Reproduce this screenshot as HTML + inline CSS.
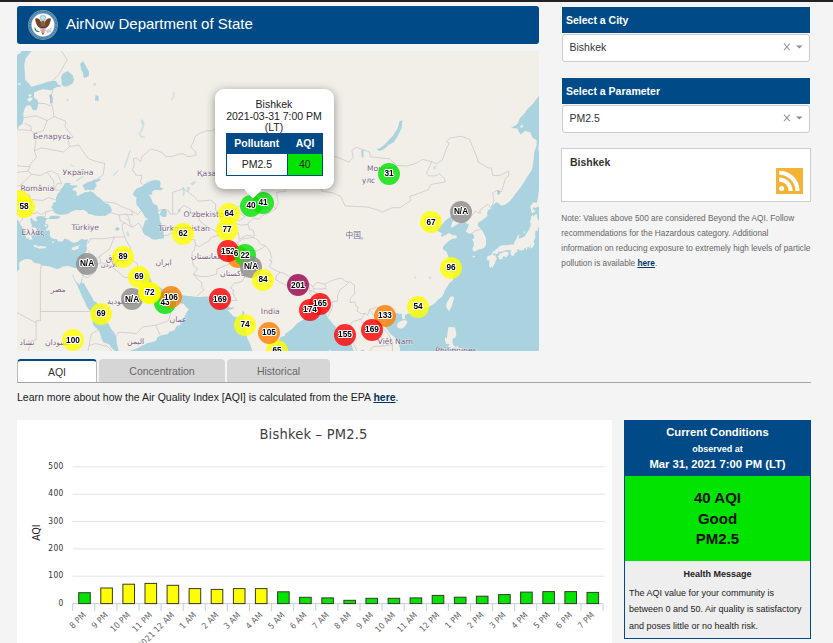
<!DOCTYPE html>
<html lang="en">
<head>
<meta charset="utf-8">
<title>AirNow Department of State</title>
<style>
html,body{margin:0;padding:0;}
body{width:833px;height:643px;overflow:hidden;position:relative;background:#f4f4f4;font-family:"Liberation Sans",Arial,sans-serif;color:#222;}
.abs{position:absolute;}
#topbar{left:0;top:0;width:833px;height:2px;background:#222;}
#hdr{left:17px;top:6px;width:522px;height:38px;background:#004b87;border-radius:3px;color:#fff;}
#hdr .t{position:absolute;left:49px;top:-1px;line-height:38px;font-size:15px;white-space:nowrap;}
#map{left:17px;top:51px;width:522px;height:300px;background:#f2efe9;overflow:hidden;}
.ph{left:562px;width:248px;height:26px;background:#004b87;color:#fff;font-weight:bold;font-size:10.5px;line-height:26px;}
.ph span{padding-left:4px;}
.sel{left:561.5px;width:246.5px;height:25.5px;background:#fff;border:1px solid #ccc;border-radius:3px;font-size:10.5px;line-height:24px;color:#333;}
.sel span{padding-left:7px;}
#citybox{left:561px;top:148px;width:248px;height:52px;background:#fff;border:1px solid #ccc;}
#citybox b{position:absolute;left:8px;top:7px;font-size:10.5px;color:#333;}
#note{left:561.3px;top:211px;width:262px;white-space:nowrap;font-size:8.25px;line-height:15px;color:#666;}
#note a{color:#00355f;font-weight:bold;text-decoration:underline;}
.tab{top:359px;height:23px;line-height:25px;text-align:center;font-size:10.5px;border-radius:4px 4px 0 0;background:#d6d6d6;color:#666;}
#tab1{left:17px;width:78px;background:#fff;color:#333;border:1px solid #bbb;border-bottom:none;border-top:2px solid #004b87;height:21px;line-height:22px;}
#tabline{left:17px;top:382px;width:794px;height:1px;background:#a4a4a4;}
#learn{left:17px;top:391px;font-size:10.5px;line-height:12px;white-space:nowrap;color:#222;}
#learn a{color:#00355f;font-weight:bold;text-decoration:underline;}
#chart{left:17px;top:420px;width:595px;height:230px;background:#fff;}
.mk{position:absolute;width:22px;height:22px;border-radius:50%;opacity:.8;filter:blur(.5px);}
.ml{position:absolute;width:40px;height:12px;line-height:12px;text-align:center;font-weight:bold;font-size:9.4px;transform:scaleX(.88);color:#000;text-shadow:-.8px -.8px 0 #fff,.8px -.8px 0 #fff,-.8px .8px 0 #fff,.8px .8px 0 #fff,0 1px 0 #fff,0 -1px 0 #fff,1px 0 0 #fff,-1px 0 0 #fff;}
#pop{position:absolute;left:197.5px;top:37.5px;width:119px;height:100px;background:#fff;border-radius:9px;box-shadow:0 2px 10px rgba(0,0,0,.4);}
#pop .pt{position:absolute;left:0;right:0;top:10.5px;text-align:center;font-size:10.5px;line-height:11.5px;color:#222;}
#pop .ptab{position:absolute;left:11.5px;top:44.5px;width:96.5px;height:42.5px;}
.ptab .r1{position:absolute;left:0;top:0;width:96.5px;height:20.5px;background:#004b87;color:#fff;font-weight:bold;font-size:10.5px;line-height:20px;}
.ptab .r2{position:absolute;left:0;top:20.5px;width:96.5px;height:22px;background:#004b87;font-size:10.5px;line-height:21px;color:#222;}
.ptab .c1{position:absolute;left:0;width:61.5px;text-align:center;}
.ptab .c2{position:absolute;left:61.5px;width:35px;text-align:center;}
.ptab .r2 .c1{left:.75px;top:0;width:60.25px;height:21.25px;background:#fff;}
.ptab .r2 .c2{left:61.75px;top:0;width:34px;height:21.25px;background:#00e400;}
#poptip{position:absolute;left:230px;top:132.5px;width:12px;height:12px;background:#fff;transform:rotate(45deg);}
#cc{left:624px;top:420px;width:185px;height:217px;border:1px solid #004b87;background:#eee;}
#cc .h{position:absolute;left:0;top:0;width:185px;height:55px;background:#004b87;color:#fff;text-align:center;font-weight:bold;}
#cc .g{position:absolute;left:0;top:55px;width:185px;height:85px;background:#00e400;color:#111;text-align:center;font-weight:bold;font-size:15px;line-height:20.5px;}
#cc .m{position:absolute;left:0;top:140px;width:185px;}
</style>
</head>
<body>
<div id="topbar" class="abs"></div>
<div id="hdr" class="abs"><svg class="seal" width="32" height="32" viewBox="-16 -16 32 32" style="position:absolute;left:9.8px;top:2.9px">
<circle r="14.9" fill="#7fae93"/><circle r="14.2" fill="#3a72b0"/><circle r="13" fill="none" stroke="#7ea3cf" stroke-width="1.3" stroke-dasharray=".9 .7"/><circle r="11.9" fill="#9fc0c9"/><circle r="11.2" fill="#fff"/>
<circle cx="0" cy="-7" r="3.2" fill="#a9cfe0"/><circle cx="0" cy="-7" r="1.7" fill="#cfe4ee"/>
<path d="M-1.6 -2.5C-3.2 -6.6-6.3 -7.6-7.9 -6.3C-7.6 -3.2-6.6 -.5-5 1.6L-2.4 3.6L-1.4 1Z" fill="#754524"/>
<path d="M1.6 -2.5C3.2 -6.6 6.3 -7.6 7.9 -6.3C7.6 -3.2 6.6 -.5 5 1.6L2.4 3.6L1.4 1Z" fill="#754524"/>
<path d="M-1.7 -3.6Q0 -5 1.7 -3.6L1.9 1.5H-1.9Z" fill="#8a5a2c"/>
<path d="M-2.6 5L0 10.2L2.6 5L1.2 6.8H-1.2Z" fill="#7a4a25"/>
<path d="M-2.3 1.2H2.3V5.2Q2.3 7.6 0 8.4Q-2.3 7.6-2.3 5.2Z" fill="#e36a6a"/>
<path d="M-2.3 1.2H2.3V3.2H-2.3Z" fill="#27408b"/>
<path d="M-1.4 3.2V7.7M0 3.2V8.3M1.4 3.2V7.7" stroke="#fff" stroke-width=".55"/>
<path d="M-8.6 2.5C-8.8 5-7.2 7-4.6 7.3L-3 6.2C-5.5 6-7.4 4.6-7.6 2.4Z" fill="#3e8a4a"/>
<path d="M3 6.2L8.2 3.2M3.6 7L8.8 4.6M4 7.7L8.4 6.3" stroke="#9a9a9a" stroke-width=".6"/>
</svg><span class="t">AirNow Department of State</span></div>
<div id="map" class="abs">
<svg width="522" height="300" viewBox="0 0 522 300" style="position:absolute;left:0;top:0">
<path d="M103.2 311.7L103.2 308.7L101.5 307.4L99.8 307.0L101.1 305.7L101.5 303.0L100.6 301.9L98.9 300.9L97.2 299.5L94.7 296.9L92.5 293.8L90.4 292.5L87.8 292.1L86.1 290.7L85.1 289.0L84.0 285.9L82.7 281.4L81.4 278.7L78.5 276.5L76.3 274.2L75.5 271.0L75.5 266.0L74.6 263.3L74.2 260.5L71.6 258.2L69.1 254.5L68.2 251.3L66.1 247.5L64.4 243.7L63.1 240.9L61.6 237.6L60.1 233.7L58.0 230.3L55.8 226.0L55.4 222.8L56.3 224.0L56.7 226.4L58.4 229.4L60.1 231.8L62.9 233.6L63.7 231.3L65.0 227.4L66.0 224.7L65.4 227.9L64.6 231.8L66.9 232.0L68.6 235.2L72.5 241.9L75.5 247.0L76.7 250.3L79.3 251.0L81.4 254.5L83.1 258.2L83.8 263.3L86.1 267.4L89.5 270.6L92.1 273.8L93.8 277.4L96.8 280.9L98.5 284.1L99.4 287.6L99.8 292.5L101.3 298.2L102.1 302.2L104.5 302.6L108.7 301.7L115.1 299.1L120.7 296.9L125.8 294.3L130.9 292.1L136.5 290.7L139.5 289.4L140.3 286.3L145.4 284.1L150.6 283.2L152.7 280.5L157.4 279.2L159.9 274.7L163.4 274.2L162.9 268.8L166.3 267.9L168.1 264.2L170.2 260.5L172.0 258.2L169.3 256.4L166.8 253.1L163.4 252.2L159.1 249.9L157.4 246.6L157.2 243.3L157.6 240.2L156.5 240.9L155.7 242.8L153.1 244.9L150.1 247.5L148.0 249.9L142.9 250.6L138.2 251.3L136.9 249.6L136.9 246.6L136.7 242.8L135.2 241.1L133.7 243.7L133.7 247.5L132.6 245.6L130.9 242.8L130.3 239.5L128.8 237.1L125.8 234.2L124.5 231.3L122.8 228.4L121.3 225.5L122.0 223.0L124.1 222.8L125.8 220.5L128.4 222.3L130.9 222.3L133.1 226.4L133.9 228.4L135.6 232.8L140.7 234.7L145.0 238.0L149.7 239.2L153.5 238.0L157.0 236.4L159.5 237.1L160.8 240.9L163.4 243.5L168.5 244.7L175.3 245.2L179.6 245.9L182.6 245.9L187.7 245.4L192.4 245.6L196.2 244.7L200.1 244.2L201.3 247.0L203.5 248.0L205.2 252.2L207.7 253.1L209.9 255.0L214.1 256.4L217.1 255.9L216.3 257.8L212.0 258.9L210.9 259.6L213.7 262.4L216.7 265.4L219.7 266.5L223.1 265.1L224.8 263.3L226.1 259.6L227.4 261.5L226.9 264.7L227.1 269.7L227.4 274.2L229.1 280.9L230.3 287.6L232.1 290.7L233.8 295.1L235.9 301.3L238.5 306.1L240.2 308.7L240.6 311.7ZM257.2 311.7L257.4 308.7L257.4 305.2L259.4 300.4L258.7 296.5L258.5 291.2L261.9 288.5L263.6 286.3L267.9 284.5L268.3 282.7L272.2 280.0L276.0 276.9L279.8 272.4L283.3 270.6L286.7 268.3L287.9 265.1L288.4 262.8L291.8 261.9L293.5 262.4L296.5 261.9L299.9 261.5L302.5 260.5L303.7 257.8L306.3 257.8L308.4 259.2L309.3 263.3L310.6 266.5L313.1 269.2L316.1 272.9L318.7 275.6L319.9 279.6L319.1 287.6L323.4 288.7L326.3 286.7L329.8 283.6L331.5 284.1L333.2 285.9L333.8 291.2L335.3 296.0L337.0 300.9L337.7 305.2L338.1 308.7L338.3 311.7ZM341.3 311.7L341.1 308.7L342.3 306.1L343.4 302.6L343.2 300.0L344.9 298.7L347.3 298.9L347.3 302.4L349.8 302.4L352.8 303.9L355.4 306.1L356.4 308.7L356.6 311.7ZM381.4 311.7L381.6 308.7L382.7 305.7L383.1 301.3L382.9 297.3L381.8 292.9L380.5 289.8L378.6 287.2L375.8 285.0L373.3 282.7L371.1 279.6L369.4 277.4L367.7 275.1L368.4 271.0L370.7 268.3L372.4 266.0L375.4 264.2L378.0 262.8L380.5 261.9L382.7 263.1L384.8 262.8L385.0 265.6L385.7 268.3L388.2 268.1L387.8 264.2L390.3 262.8L394.2 261.9L398.0 261.0L401.0 259.6L404.0 259.2L406.1 257.3L410.0 256.8L414.2 254.5L417.7 252.2L420.6 248.9L424.1 246.6L426.6 243.3L427.5 239.9L430.0 236.1L432.2 232.3L435.6 229.4L436.9 225.0L436.0 222.5L432.6 221.0L435.1 218.8L437.1 217.6L436.0 214.1L433.0 210.5L431.3 205.5L429.6 200.8L425.8 198.2L426.2 195.6L429.2 192.2L431.7 189.9L435.6 187.7L439.6 187.2L439.6 184.5L435.1 184.0L432.2 182.1L428.7 184.0L424.5 185.9L424.1 183.4L425.3 182.4L421.9 180.7L418.9 178.0L419.1 175.3L422.3 175.3L425.8 173.1L427.5 170.3L431.3 167.5L433.9 165.3L436.9 165.5L438.1 167.5L435.1 171.4L434.3 174.7L434.3 176.9L436.4 175.8L439.8 173.6L443.7 171.4L447.1 170.6L449.7 172.5L451.8 173.6L450.5 177.5L448.8 180.5L451.4 182.6L455.2 182.4L456.9 184.5L457.3 187.2L455.2 188.3L456.5 190.9L456.9 194.1L455.6 197.2L455.6 199.8L458.2 200.6L461.2 198.5L464.6 198.0L467.1 196.7L468.9 194.1L469.1 191.4L468.9 186.7L467.1 182.9L464.6 178.6L460.7 174.7L461.2 171.4L464.2 170.0L468.0 166.9L470.3 165.3L470.1 161.8L471.4 159.0L474.4 157.3L474.8 154.9L479.1 151.4L481.2 151.7L483.8 154.4L488.1 153.8L492.7 150.3L496.2 146.1L499.1 141.9L503.0 137.1L506.8 131.5L509.8 126.5L514.5 119.5L515.4 116.3L516.6 108.4L517.5 100.3L519.6 94.8L519.6 89.2L515.8 87.0L513.2 81.3L508.5 79.8L503.4 83.4L500.4 77.6L494.0 76.9L500.4 73.1L503.0 67.1L506.8 63.3L510.7 57.8L516.2 52.6L520.5 46.6L524.7 41.6L528.2 40.3L533.3 39.9L539.7 39.9L539.7 311.7ZM-23.5 144.3L-19.7 143.1L-18.8 145.5L-16.7 147.9L-15.0 150.3L-12.9 150.3L-9.9 152.6L-7.7 154.1L-6.0 155.2L-3.9 156.7L-1.8 158.7L-0.5 161.3L-0.3 163.0L-0.5 167.5L-0.1 168.6L2.1 170.9L2.9 173.1L5.1 175.8L6.8 179.1L9.3 179.9L7.2 181.8L8.9 184.5L9.3 187.7L11.5 186.9L12.5 189.6L14.0 188.0L15.7 189.6L14.9 186.7L14.0 183.7L16.2 184.5L17.0 183.2L15.3 181.5L17.9 181.8L19.4 183.2L19.1 180.2L16.6 178.0L14.5 176.4L14.9 174.2L13.6 170.9L13.2 167.8L14.7 166.9L16.2 169.2L18.7 170.6L20.4 169.5L18.7 166.9L20.9 165.3L24.3 165.0L27.3 165.5L28.1 166.9L31.1 166.9L28.5 170.0L28.5 173.3L31.5 173.6L31.1 176.4L29.4 177.7L29.0 179.9L32.4 179.1L33.0 181.8L32.8 184.5L34.1 186.7L37.1 188.0L40.1 188.3L41.3 190.4L45.6 190.4L47.3 187.5L51.1 188.5L53.7 190.4L56.7 191.8L60.5 190.9L64.4 187.7L67.8 188.8L71.2 188.3L69.9 192.0L69.5 194.6L69.9 198.2L68.6 201.4L68.0 203.4L66.5 207.0L65.9 208.5L65.0 212.1L63.5 215.1L61.0 217.1L57.5 217.1L54.6 216.1L51.1 215.1L48.6 215.3L46.0 215.6L43.9 216.8L40.1 218.3L35.4 216.6L32.8 215.6L27.7 214.8L24.3 214.6L23.0 212.8L19.1 212.3L15.7 211.0L15.3 209.3L12.7 208.3L8.9 208.0L5.9 209.0L2.5 211.0L1.9 214.1L2.5 218.1L0.4 220.3L-2.2 221.0L-5.6 219.6L-9.0 217.8L-12.4 216.6L-16.3 215.1L-17.8 212.6L-18.8 210.5L-23.5 209.5ZM40.9 163.6L37.1 161.6L36.2 159.0L34.1 156.1L35.8 154.4L35.8 152.0L38.8 150.9L39.0 146.7L40.9 142.5L43.3 140.1L43.7 138.3L45.6 136.2L47.9 132.2L50.7 131.5L52.9 132.2L54.6 132.2L52.4 133.4L55.8 134.6L58.8 134.6L60.1 134.3L60.1 136.2L56.7 137.1L55.4 139.2L58.8 140.1L59.9 142.2L59.3 144.0L60.7 145.0L63.5 143.4L66.1 142.2L67.8 141.0L70.3 141.3L72.3 140.7L73.1 140.1L75.9 141.3L78.0 143.1L79.7 144.9L83.1 147.3L86.1 150.0L88.7 152.3L91.7 153.2L93.8 156.1L94.9 159.6L94.2 161.3L91.7 163.0L88.3 165.0L86.1 164.7L82.3 165.0L78.9 164.7L75.9 164.1L73.3 163.0L71.2 163.0L69.9 160.7L66.7 158.7L63.1 159.3L58.8 159.0L54.6 160.4L50.7 163.0L45.6 163.8ZM72.7 139.5L71.6 138.6L68.2 139.5L66.7 136.8L65.4 134.3L67.8 133.1L70.3 131.2L73.8 130.6L77.2 128.4L80.2 128.4L82.7 127.8L84.4 128.1L82.7 129.4L80.2 130.9L78.0 131.5L79.3 133.4L79.7 135.3L78.0 136.5L77.2 138.9L74.2 138.9ZM31.1 167.5L33.7 165.0L36.2 164.7L40.3 164.7L43.9 166.1L40.5 168.1L36.2 168.1L33.7 168.3ZM119.4 153.5L119.2 148.5L119.8 146.7L116.2 144.3L116.4 141.9L118.1 138.9L120.7 137.1L124.1 135.9L127.1 133.4L130.1 131.5L134.3 129.7L138.6 129.1L142.9 129.7L143.7 132.8L142.9 135.9L146.3 137.7L143.3 139.5L141.6 138.9L137.8 138.9L135.2 140.4L135.2 143.7L131.4 143.7L133.5 146.1L135.2 149.7L136.1 152.6L140.3 154.4L141.6 159.0L140.7 161.3L142.5 163.6L142.5 165.8L142.9 170.3L144.6 172.5L143.3 174.2L146.7 176.4L146.5 182.4L147.1 185.1L146.9 187.5L142.9 187.7L138.6 188.8L135.2 188.3L131.4 185.6L127.9 184.0L125.6 180.7L125.4 176.9L126.7 174.2L127.7 170.6L129.7 168.6L131.8 168.3L128.4 166.7L126.7 163.6L124.1 159.8L122.4 157.3ZM142.7 163.6L144.6 159.0L148.0 157.8L150.1 161.3L149.3 165.8L145.4 166.1ZM-23.5 -21.8L25.5 -21.8L24.7 -14.5L21.7 -9.5L16.6 -2.5L11.9 3.3L8.5 8.0L7.2 14.5L8.1 23.5L8.1 28.8L11.9 32.3L14.5 35.7L20.4 34.0L26.4 32.3L31.9 30.6L36.2 30.1L39.2 30.1L40.5 33.1L44.3 34.9L43.0 35.7L40.1 36.1L36.6 37.4L35.8 39.5L29.8 38.7L25.5 38.2L21.7 39.5L17.0 41.6L17.0 46.6L20.4 49.0L21.3 52.2L20.6 57.0L18.7 59.4L15.7 59.0L13.6 54.6L9.8 54.6L7.6 57.8L6.3 62.5L6.6 68.6L5.5 73.1L2.1 75.0L0.4 78.7L-3.0 79.4L-4.7 76.5L-9.4 76.5L-13.7 79.8L-19.3 81.6L-23.5 82.0Z" fill="#aad3df"/>
<path d="M-23.5 159.0L-19.3 159.3L-17.1 159.6L-15.0 159.3L-14.1 160.1L-15.4 161.8L-11.1 164.1L-8.6 165.5L-6.5 166.7L-4.3 169.5L-5.0 171.4L-6.5 170.3L-7.3 168.6L-9.9 167.5L-11.1 168.1L-12.4 170.3L-12.9 172.0L-10.3 173.6L-9.9 175.8L-12.4 176.9L-12.6 179.1L-14.6 181.5L-16.5 181.5L-16.5 180.2L-15.6 178.0L-14.3 177.2L-14.8 174.2L-16.1 170.9L-17.5 170.0L-19.3 168.6L-23.5 168.1ZM-23.5 180.7L-18.4 180.2L-16.7 179.9L-18.0 182.4L-18.6 184.0L-18.0 186.4L-18.8 188.5L-23.5 188.0ZM17.0 194.1L19.6 194.3L20.4 195.4L23.4 195.0L26.8 195.6L29.0 195.6L28.7 197.2L25.5 197.5L22.3 197.7L19.1 196.2L17.0 195.9ZM54.6 196.9L55.8 196.2L57.3 196.4L57.5 195.4L60.5 195.1L64.4 193.5L61.6 195.6L61.4 196.7L62.0 197.4L60.1 198.2L57.5 199.3L55.0 198.5ZM34.9 191.2L37.1 189.6L37.3 190.4L35.6 192.5ZM14.9 176.4L16.6 175.8L19.6 177.7L21.7 181.3L20.0 181.3L17.4 179.1ZM27.0 174.5L29.4 173.9L30.2 175.6L28.1 175.8ZM389.1 269.2L390.6 271.3L388.2 275.1L386.1 276.9L383.9 277.8L380.5 276.5L380.1 272.9L382.7 270.4L386.1 269.2ZM435.4 245.2L437.3 246.6L435.8 251.3L434.7 255.5L432.6 259.2L432.4 261.0L431.3 258.9L429.8 257.3L429.2 254.5L429.8 251.7L431.7 248.5L433.2 246.3ZM455.0 206.0L456.5 204.7L458.4 205.2L456.9 206.5ZM475.5 202.6L473.1 204.4L470.6 204.9L469.7 207.5L470.6 209.5L472.3 209.0L472.3 212.1L472.3 216.1L474.0 216.8L474.4 214.6L475.3 217.3L476.1 215.6L477.6 213.1L478.7 209.5L479.9 207.5L478.7 206.0L478.7 204.2L476.5 204.4ZM482.3 202.6L484.2 202.4L486.8 200.8L489.3 200.6L491.3 201.4L491.5 203.4L489.3 206.2L486.6 204.9L484.2 208.8L482.1 207.8L481.7 206.0L480.2 205.7L482.1 204.4ZM475.3 202.6L475.3 200.8L477.4 200.1L480.4 197.2L482.9 194.9L485.5 194.3L489.8 194.3L493.6 193.5L496.6 193.8L497.4 190.9L500.0 186.9L500.2 184.8L502.8 184.0L501.5 186.1L501.7 187.7L505.1 186.7L508.1 184.8L510.2 181.5L512.4 178.0L513.9 174.2L513.0 170.6L514.1 167.5L513.7 166.7L515.4 163.8L516.6 165.3L518.1 163.6L519.6 162.7L520.3 166.9L522.0 170.3L522.8 173.1L520.9 178.0L520.5 179.7L518.3 180.2L518.1 183.4L518.3 186.7L516.6 190.4L517.7 193.3L515.8 196.2L513.4 197.7L513.4 195.4L514.1 194.1L512.8 194.9L512.6 196.4L510.5 195.9L510.2 197.7L509.2 199.3L508.7 196.7L507.7 197.2L506.4 199.3L502.6 199.3L500.9 198.2L499.8 199.0L500.9 200.8L498.3 201.6L496.2 205.2L494.5 204.2L493.2 201.9L494.5 199.3L492.3 199.0L489.8 198.8L486.8 200.1L484.2 200.8L481.7 200.8L480.4 203.2L477.8 202.4ZM491.5 200.6L492.7 199.3L492.5 200.8ZM506.4 182.1L507.7 179.7L507.9 181.3L507.3 182.4ZM514.9 162.1L514.1 159.0L513.2 155.5L515.8 152.0L516.2 151.2L519.2 152.0L520.1 150.9L521.1 145.5L521.8 140.1L522.4 138.3L525.2 141.3L528.2 144.6L532.4 147.3L536.7 145.5L539.7 145.5L539.7 152.0L536.3 152.0L533.3 153.5L529.9 155.5L528.2 159.3L524.7 157.6L521.3 155.5L518.3 157.0L515.8 156.1L516.2 158.4L518.8 159.8L517.9 160.4L516.0 162.1ZM525.6 79.1L523.5 85.6L521.8 92.7L521.3 98.2L523.0 104.4L523.0 112.4L522.6 119.5L523.0 125.9L522.2 132.2L522.8 135.6L524.7 131.5L528.2 130.3L528.8 134.9L529.4 132.8L527.3 127.8L525.2 125.3L526.5 118.9L527.3 114.3L531.1 115.6L534.1 118.2L532.4 115.0L528.6 112.4L530.3 106.4L528.6 99.6L528.2 93.4L527.7 87.0L526.9 82.0ZM502.6 76.1L506.0 73.1L505.5 76.9ZM536.7 148.8L539.7 144.3L539.7 147.9ZM431.3 276.2L433.9 276.0L438.1 276.5L439.0 281.8L439.4 283.6L438.1 286.7L435.6 288.1L435.6 291.2L436.0 293.8L438.1 296.0L440.3 295.1L442.0 296.9L445.0 296.9L444.1 299.1L446.5 300.9L446.2 302.8L445.2 302.4L442.8 300.9L439.8 300.0L439.4 296.9L436.0 296.7L433.9 298.2L431.5 297.1L431.3 294.7L433.0 293.8L431.3 292.9L429.2 292.9L428.1 289.4L427.9 286.3L430.0 287.2L430.2 284.1L430.7 280.5ZM430.0 298.9L432.8 298.7L435.1 300.9L435.1 303.5L433.4 304.1L431.7 302.2ZM447.1 302.8L451.4 302.8L453.1 308.7L453.1 311.7L449.7 311.7L449.7 307.8L447.3 305.2ZM442.4 303.0L445.4 304.3L445.8 306.1L443.7 305.0ZM436.9 305.7L439.8 307.2L442.0 307.2L442.0 311.7L436.9 311.7ZM428.3 303.9L430.0 304.3L429.6 306.1L428.3 305.7ZM425.3 311.7L426.2 308.1L427.0 311.7ZM113.0 311.7L119.0 308.8L122.8 308.3L126.7 308.3L130.1 307.2L133.5 305.4L135.4 305.9L134.8 308.7L134.8 311.7ZM144.2 302.8L147.1 302.2L149.3 302.8L146.3 303.9ZM312.3 298.7L313.8 299.1L313.3 303.0L312.7 306.5L311.6 306.5L311.8 302.6ZM132.0 240.7L132.9 240.9L132.6 242.6L132.2 242.3ZM152.7 238.8L156.5 237.3L156.7 238.0L154.0 239.2ZM166.8 266.7L168.3 267.6L167.2 268.8ZM436.9 222.0L438.6 221.8L438.1 223.0ZM434.3 213.8L436.9 214.8L435.6 215.3ZM-6.0 57.0L-3.0 51.8L-1.8 52.6L-3.5 57.8ZM-13.3 65.2L-10.3 56.6L-11.1 62.5ZM10.2 49.0L11.9 46.6L15.7 47.0L14.9 49.0L12.3 51.0ZM11.0 44.1L13.6 42.8L14.9 44.5L12.7 45.7ZM-23.5 34.9L-9.4 17.2L-8.6 12.7L-5.6 8.9L-2.2 5.2L3.4 2.3L7.6 -5.5L8.9 -11.5L11.5 -17.6L12.3 -21.8L-23.5 -21.8ZM-23.5 65.6L-15.8 66.3L-13.3 61.7L-12.0 55.4L-12.4 49.8L-10.3 45.7L-5.6 40.8L-2.6 35.7L-4.3 32.3L-9.4 28.8L-9.9 20.0L-9.4 17.2L-23.5 17.2ZM0.4 33.6L3.4 31.4L3.4 34.0ZM-20.5 73.9L-18.6 73.5L-18.8 74.6Z" fill="#f2efe9"/>
<path d="M44.7 34.0L48.2 35.7L51.1 34.9L55.8 32.3L57.1 28.8L55.8 24.4L50.7 20.0L46.0 22.6L43.9 26.2L44.7 30.6ZM67.8 27.1L71.6 25.3L72.1 20.9L68.6 14.5L66.1 9.9L63.1 12.7L64.4 19.1L66.1 21.8L66.1 25.3ZM78.0 49.8L81.9 49.8L81.4 44.9L78.5 44.1ZM33.2 52.2L35.8 52.2L35.8 46.6L34.5 43.3L31.9 44.1L33.2 48.2ZM359.2 98.6L363.0 100.0L367.3 97.9L371.6 94.1L376.7 91.3L380.5 85.6L384.4 77.6L385.7 69.4L382.7 70.1L380.5 77.6L376.3 84.2L371.6 89.2L367.3 94.1L362.6 97.2ZM229.9 137.7L231.2 134.0L235.0 130.6L239.3 131.2L243.6 132.2L247.8 131.5L252.1 131.5L255.1 130.3L254.7 133.4L250.4 134.0L246.1 133.4L241.0 134.0L236.7 134.0L234.2 137.1L232.9 141.3L230.8 140.7ZM241.9 156.7L246.6 154.7L250.8 154.9L250.4 157.3L246.1 158.4L243.1 158.1ZM97.7 178.0L100.2 176.1L102.8 177.5L101.1 179.7L98.5 179.1ZM479.9 139.5L482.9 139.5L483.4 143.1L480.4 144.0ZM342.1 186.1L346.0 185.9L346.4 188.3L343.0 188.8ZM344.3 98.9L346.4 98.9L346.4 106.4L344.7 106.4Z" fill="#aad3df"/>
<path d="M76.3 34.4L78.9 34.4L78.9 31.9L76.3 31.9ZM49.4 50.2L51.6 50.2L51.6 47.8L49.4 47.8ZM263.2 133.4L266.6 133.1L266.6 135.9L263.6 135.6ZM272.2 121.5L279.0 122.7L279.0 124.0L273.4 123.7ZM173.2 132.8L176.6 130.3L179.6 130.9L177.0 133.4L175.3 134.6ZM165.1 135.9L166.8 135.9L168.1 141.3L166.8 145.5L165.5 144.3L165.9 140.1ZM169.8 135.9L172.7 135.9L172.7 139.5L170.2 141.3ZM160.8 157.8L163.4 157.8L163.8 161.3L161.2 161.3ZM109.2 181.8L110.9 179.7L112.6 183.4L111.3 185.9L110.0 184.5ZM108.7 166.9L110.9 168.1L110.9 169.2L109.2 168.6ZM416.4 115.0L418.9 115.0L418.5 118.2L416.8 118.2ZM310.1 106.4L314.8 106.4L314.4 109.1L311.0 109.1ZM359.2 300.0L360.5 300.0L363.0 303.0L361.8 303.5ZM124.1 67.9L127.5 70.9L127.1 74.6L125.4 79.8L122.8 82.7L124.5 84.9L127.5 85.6L127.9 87.0L123.7 86.3L121.5 82.7L124.1 79.1L125.4 74.6L123.3 70.1ZM112.6 98.9L113.9 98.9L110.5 109.7L107.9 116.9L106.6 116.9L108.7 109.7ZM96.4 125.3L100.2 121.5L101.5 119.5L100.6 118.9L98.5 121.5L95.9 124.0ZM58.8 129.7L61.8 127.2L66.5 124.6L66.5 125.9L62.7 128.4L59.7 130.6ZM53.7 113.0L58.0 115.6L58.0 116.6L53.7 114.3ZM154.8 49.8L157.0 46.6L157.8 40.8L156.5 40.8L155.7 45.7L154.0 49.0ZM246.1 73.9L250.4 75.4L249.5 77.6L246.6 76.9ZM209.4 105.7L212.4 105.7L212.0 108.4L209.9 108.4ZM428.3 215.6L430.9 215.6L430.5 217.6L428.7 217.6ZM411.7 225.0L414.2 226.0L413.8 228.4L412.1 227.9ZM397.2 226.0L399.3 225.5L398.9 227.4L397.2 227.4Z" fill="#aad3df" opacity="0.55"/>
<path d="M125.8 133.4L123.3 131.5L125.0 124.6L118.6 124.0L117.3 120.8L115.1 119.5L117.3 115.0L116.4 107.7L119.4 107.1L123.7 110.4L125.0 105.7L133.5 98.2L140.7 99.6L145.0 101.7L149.3 105.7L154.4 105.7L162.1 103.0L166.8 103.0L170.6 105.7L179.1 104.4L178.7 100.3L173.6 96.2L177.0 89.9L177.9 85.6L183.4 82.0L189.8 79.8L194.9 79.8L198.3 77.6L207.7 74.6L211.1 72.4L218.8 72.4L220.5 80.5L226.1 82.0L230.3 82.0L232.5 84.9L243.1 80.5L249.1 87.0L258.1 104.4L264.5 104.4L272.6 103.0L280.7 107.7L289.2 115.6M289.2 115.6L282.8 120.2L282.4 127.2L270.9 127.8L267.9 138.3L269.2 140.1L259.4 141.3L261.1 152.0L258.9 157.8M289.2 115.6L291.4 115.0L299.0 110.4L311.4 104.4L319.1 105.7L331.9 111.1L336.2 106.4L334.9 99.6L339.1 96.2L352.8 101.0L353.2 105.7L364.7 107.1L372.4 107.7L379.7 114.3L389.5 115.0L398.9 112.4L405.3 108.4L414.7 110.7L419.4 113.0M291.4 115.0L294.8 121.5L304.6 133.4L305.0 140.1L315.7 141.9L323.8 145.5L328.1 154.9L341.3 155.5L351.1 156.1L362.6 159.6L364.7 161.3L375.4 156.7L383.1 156.7L394.2 149.1L392.5 145.5L401.4 142.5L410.8 138.9L414.2 133.4L417.7 132.8L428.3 130.9L427.5 127.8L422.3 122.7L417.7 125.0L411.3 124.6L409.5 121.8L411.7 117.6L414.7 110.7M419.4 113.0L425.3 109.1L429.2 98.2L432.2 92.0L429.2 90.6L433.0 87.0L444.1 85.2L452.6 88.4L460.7 108.4L461.2 111.1L471.4 116.9L474.4 116.9L475.7 124.6L482.5 124.6L491.5 120.2L491.9 124.6L488.5 127.2L484.6 140.7L479.5 139.5L475.7 141.9L477.0 150.3L474.0 156.7M474.0 156.7L471.0 153.2L462.9 159.0L463.3 162.4L458.2 160.1L454.3 165.3L447.5 170.3M454.8 182.4L458.6 179.7L464.6 178.0M377.5 262.8L373.3 261.0L372.0 256.4L366.0 254.5L363.9 256.8L357.5 256.8L352.6 258.7L350.7 264.2L348.3 262.4L344.3 262.8L340.0 260.1L341.3 256.4L338.7 255.0L337.9 250.8L333.2 251.7L333.2 247.5L337.9 242.3L337.4 234.2L332.7 230.8L331.9 231.3M331.9 231.3L327.2 235.6L322.5 239.0L320.4 245.6L320.8 249.9L314.8 251.0L315.3 255.5L314.4 259.6L311.8 263.8L310.6 266.0M311.8 261.0L309.1 252.7L305.9 253.1L306.7 250.8L311.0 246.6L299.9 245.2L299.9 241.9L293.9 239.5L292.6 242.8L296.5 246.6L292.6 248.9L295.2 250.8L295.6 255.0L296.7 260.1L296.5 262.4M258.5 228.4L259.8 224.0L263.2 221.5L267.0 222.0L275.6 227.9L283.7 232.3L292.6 232.8L292.6 239.9L287.9 239.9L282.8 239.0L278.1 236.1L272.2 235.4L265.3 232.3L258.5 228.4M296.1 235.6L299.9 231.3L307.6 233.2L309.3 237.8L302.0 238.0L296.5 238.0L296.1 235.6M292.6 232.8L296.1 235.6M307.6 233.2L315.3 229.4L323.8 226.9L328.5 230.3L331.9 231.3M263.2 221.5L258.9 219.6L254.2 217.1L252.5 215.1L255.1 210.0L252.5 209.5L254.7 206.5L253.0 200.8L248.7 194.6M207.7 252.7L210.3 249.9L219.7 249.4L215.8 242.3L216.7 239.0L213.3 237.1L217.1 232.3L224.8 230.6L229.9 223.0L234.6 217.6L235.0 213.1L238.5 211.0L235.5 210.0L232.5 206.5L232.1 199.3L239.7 199.8L245.3 197.2L248.7 194.6M176.6 223.3L183.4 225.5L190.2 225.5L199.6 223.3L200.1 218.1L206.0 215.6L212.4 213.1L213.3 207.0L216.7 206.0L215.0 202.4L220.1 202.1L222.2 195.1L220.5 191.4L226.1 187.7L236.3 186.4M236.3 186.4L240.6 188.8L244.4 193.8L248.7 194.6M236.3 185.3L229.5 184.2L222.2 188.3L221.4 181.8L216.3 183.4L212.4 186.1L206.9 186.7L206.0 185.6L200.5 184.8L196.6 185.6L193.2 187.2L191.9 190.4L186.0 193.0L182.6 195.6L178.3 194.1M178.3 194.1L177.4 198.8L174.9 202.4L175.3 207.0L176.4 215.1L180.4 217.6L176.6 223.3L179.6 227.4L184.7 231.3L184.7 236.1L186.8 239.0L179.6 245.6M178.3 194.1L177.9 188.8L174.0 188.5L169.8 184.0L161.7 180.2L157.4 180.7L150.6 184.2L146.7 184.8M123.9 222.8L120.3 218.1L120.3 212.6L113.0 207.5L110.9 202.4L113.9 196.7L110.5 192.0L107.9 185.9M107.9 185.9L105.8 179.1L104.9 173.6L107.9 172.0L115.1 176.4L121.5 172.0L123.0 173.6L125.4 178.8M70.3 192.5L71.2 192.0L73.3 187.7L78.9 187.7L87.4 187.7L97.4 186.1L107.9 185.9M94.0 161.8L102.3 164.1L103.2 169.7L107.9 172.0M87.4 150.9L98.1 152.0L104.5 155.5L114.7 159.6L120.7 163.6L124.1 159.8M102.3 164.1L108.7 163.0L115.6 164.1L114.7 159.6M108.7 163.0L111.3 165.8L113.0 172.5L115.1 176.4M97.4 186.1L92.5 198.2L82.3 205.5L73.8 211.0L69.1 209.0M82.3 205.5L84.0 211.8L89.1 213.1L96.4 217.1L107.5 226.4L115.1 226.9L119.0 222.0L121.5 222.5M115.1 226.9L120.3 229.9L123.3 229.6M84.0 211.8L74.6 215.1L78.9 220.0L76.7 222.5L70.8 226.4L66.1 225.7M65.7 225.0L62.9 216.1M66.1 225.0L68.2 215.1L68.6 209.0L66.5 207.0M68.6 209.0L69.9 205.5L72.9 201.4L70.3 199.0M24.1 214.3L23.4 222.5L23.4 260.5L23.4 269.7L19.1 269.7L19.1 271.9L19.1 289.0L14.5 289.4L12.3 295.6L11.5 300.0M23.4 260.5L50.7 260.5L61.8 260.5L74.2 260.5M19.1 271.9L-2.2 260.5M81.4 278.7L74.6 282.7L72.5 291.6L72.1 294.7L78.5 292.5L83.6 293.8L90.8 295.6L97.7 303.0L100.6 302.2M72.1 294.7L70.8 300.9M97.7 303.0L95.1 306.5L95.9 309.6M99.4 285.9L101.1 281.4L105.3 281.4L114.7 282.1L119.4 282.7L125.8 276.0L138.6 274.2L143.3 284.7M138.6 274.2L151.4 269.7L154.4 260.5L152.3 257.3L141.2 256.2L136.9 250.8M152.3 257.3L154.8 250.3L157.4 247.0M133.5 247.8L136.9 248.5M200.5 184.8L200.9 181.3L190.7 176.1L183.0 170.3L180.9 164.1L173.2 162.4L173.2 157.8L166.8 154.4L163.4 157.8L159.9 163.0L155.7 163.0L155.7 141.3L166.8 137.7L177.0 145.5L181.3 150.3L193.7 149.1L198.8 153.2L198.3 159.0L206.5 163.6L209.4 166.9L211.6 162.4L218.0 158.4L219.5 157.6L223.1 154.4L230.3 156.4L230.8 152.9L239.7 154.1L246.1 153.5L254.7 154.4L258.9 157.8L251.3 162.4L244.9 164.7L242.3 168.1L236.3 167.5L231.6 171.4L231.0 173.3L232.5 178.6L236.3 179.1L237.6 184.5L236.3 185.3M155.7 163.0L153.1 163.0L151.0 159.0L145.0 158.4L140.7 160.4M231.0 173.3L224.8 174.2L217.5 172.5L212.4 170.9L212.4 166.4L217.5 169.2L222.7 169.5L228.2 165.8L223.1 162.4L216.3 161.8L219.5 157.6M206.0 185.6L207.3 176.4L204.3 173.1L209.0 172.5L212.4 166.4M35.4 30.1L41.8 23.5L50.3 8.9L44.7 0.4L45.6 -6.5M36.6 39.5L33.7 44.9L34.1 53.0L35.4 55.4L37.1 65.6L48.6 70.1L48.2 76.1L56.3 86.3L51.1 87.7L52.4 95.5L61.8 94.1L67.8 103.0L71.6 107.7L78.9 110.4L87.8 112.4L86.1 124.0L79.7 128.4M20.6 52.2L27.7 52.6L33.7 55.0M6.6 66.6L19.1 64.8L30.2 69.5L37.1 65.6M30.2 69.5L26.4 79.8L17.0 82.3L14.0 79.4L1.2 78.7M14.0 79.4L14.0 75.4L7.6 72.4M52.4 95.5L46.9 101.0L35.4 98.9L24.7 96.9L17.4 99.6L18.7 91.3L17.0 82.3M17.4 99.6L19.6 106.4L13.2 113.0L13.0 115.6L11.3 120.2L14.5 123.1L23.0 124.6L30.2 121.1L34.5 119.9L40.9 123.4L44.7 132.8L40.3 132.5L37.1 138.6L43.0 139.5M30.2 121.1L36.6 129.7L37.1 138.6M-2.2 113.7L2.1 115.0L13.0 115.6M-2.2 122.1L4.2 120.8L11.3 120.2M38.7 148.9L31.9 146.7L25.5 149.4L13.6 148.5L12.5 144.3L8.1 142.2L3.4 134.3L8.5 129.1L14.5 123.1M36.3 159.1L29.2 160.7L27.9 166.1M29.2 160.7L24.7 163.3L20.4 161.6L14.7 162.8L12.1 157.3L12.7 153.2L13.6 148.5M14.7 162.8L6.3 165.5L4.6 169.7L2.1 172.0M-0.5 159.8L4.2 157.8L4.6 159.8L4.2 163.0L6.3 165.5M4.2 157.8L8.9 157.6L12.1 157.3M3.4 134.3L-2.2 135.9M-2.2 141.9L-0.5 141.9L0.4 147.3L-1.3 150.3L3.4 154.4L4.2 157.8M348.3 262.4L343.8 268.1L334.9 271.0L332.3 276.5L337.4 286.3L335.7 291.2L339.6 298.7L340.0 306.1L338.1 311.7M343.8 268.1L345.5 271.9L348.5 271.9L347.7 279.2L352.4 277.8L357.5 276.9L363.5 281.4L363.7 285.9L367.3 290.3L365.6 295.1L356.2 295.4L353.7 298.2L355.8 306.5M352.6 258.7L356.2 264.2L363.0 267.9L360.5 271.9L365.6 276.0L371.6 283.6L375.4 291.2L375.4 293.4L375.4 303.9L368.2 307.0L362.4 312.2M365.6 295.1L369.4 294.7L375.4 293.4" fill="none" stroke="#b3a3b6" stroke-width="0.55" stroke-linejoin="round" opacity="0.8"/>
<g font-family="'DejaVu Sans','Noto Sans CJK SC',sans-serif" fill="#7b6384" stroke="#fff" stroke-opacity="0.55" stroke-width="1" paint-order="stroke" letter-spacing="0"><text x="35.0" y="87.8" font-size="7.7" text-anchor="middle" >Беларусь</text><text x="61.0" y="124.3" font-size="7.7" text-anchor="middle" >Україна</text><text x="20.3" y="139.8" font-size="7.7" text-anchor="middle" >România</text><text x="16.0" y="183.8" font-size="7.7" text-anchor="middle" >Ελλάς</text><text x="68.3" y="179.3" font-size="7.7" text-anchor="middle" >Türkiye</text><text x="189.0" y="165.8" font-size="7.7" text-anchor="middle" >O'zbekiston</text><text x="41.2" y="240.9" font-size="7.7" text-anchor="middle" >مصر</text><text x="104.9" y="252.8" font-size="8" text-anchor="middle" >السعودية</text><text x="161.0" y="270.9" font-size="7.7" text-anchor="middle" >عمان</text><text x="118.6" y="293.4" font-size="7.7" text-anchor="middle" >اليمن</text><text x="10.0" y="293.8" font-size="7.7" text-anchor="middle" >تشاد</text><text x="41.2" y="293.8" font-size="7.7" text-anchor="middle" >السودان</text><text x="146.6" y="214.0" font-size="7.7" text-anchor="middle" >ایران</text><text x="100.0" y="210.0" font-size="8.5" text-anchor="middle" >العراق</text><text x="92.0" y="215.5" font-size="6.5" text-anchor="middle" >الأردن</text><text x="190.0" y="207.9" font-size="8" text-anchor="middle" >افغانستان</text><text x="215.7" y="225.0" font-size="7.7" text-anchor="middle" >پاکستان</text><text x="439.0" y="302.3" font-size="7.7" text-anchor="middle" >Philippines</text><text x="201.0" y="124.5" font-size="7.7" text-anchor="middle" >Қазақстан</text><text x="365.0" y="120.3" font-size="7.7" text-anchor="middle" >Монгол</text><text x="351.5" y="132.3" font-size="7.7" text-anchor="middle" >улс</text><text x="167.0" y="179.8" font-size="7.7" text-anchor="middle" >Türkmenistan</text><text x="253.3" y="262.9" font-size="7.7" text-anchor="middle" >India</text><text x="378.3" y="292.5" font-size="7.7" text-anchor="middle" >Việt Nam</text><text x="336.2" y="187.0" font-size="7.7" text-anchor="middle" >中国</text></g>
</svg>
<div class="mk" style="left:-9.0px;top:139.0px;background:#ffff00"></div>
<div class="mk" style="left:-3.9px;top:144.7px;background:#ffff00"></div>
<div class="mk" style="left:45.1px;top:278.4px;background:#ffff00"></div>
<div class="mk" style="left:72.9px;top:252.0px;background:#ffff00"></div>
<div class="mk" style="left:59.2px;top:202.0px;background:#8c8c8c"></div>
<div class="mk" style="left:95.1px;top:195.0px;background:#ffff00"></div>
<div class="mk" style="left:110.8px;top:215.0px;background:#ffff00"></div>
<div class="mk" style="left:104.3px;top:237.3px;background:#8c8c8c"></div>
<div class="mk" style="left:136.5px;top:240.7px;background:#00e400"></div>
<div class="mk" style="left:142.5px;top:235.4px;background:#ff7e00"></div>
<div class="mk" style="left:120.5px;top:230.6px;background:#ffff00"></div>
<div class="mk" style="left:121.6px;top:230.6px;background:#ffff00"></div>
<div class="mk" style="left:154.6px;top:171.5px;background:#ffff00"></div>
<div class="mk" style="left:201.1px;top:151.6px;background:#ffff00"></div>
<div class="mk" style="left:199.4px;top:167.7px;background:#ffff00"></div>
<div class="mk" style="left:234.5px;top:141.2px;background:#00e400"></div>
<div class="mk" style="left:223.3px;top:143.6px;background:#00e400"></div>
<div class="mk" style="left:210.1px;top:194.8px;background:#ff7e00"></div>
<div class="mk" style="left:200.0px;top:189.3px;background:#ff0000"></div>
<div class="mk" style="left:217.4px;top:193.3px;background:#00e400"></div>
<div class="mk" style="left:223.0px;top:204.5px;background:#8c8c8c"></div>
<div class="mk" style="left:235.3px;top:218.2px;background:#ffff00"></div>
<div class="mk" style="left:269.7px;top:223.4px;background:#99004c"></div>
<div class="mk" style="left:191.7px;top:237.3px;background:#ff0000"></div>
<div class="mk" style="left:216.8px;top:263.0px;background:#ffff00"></div>
<div class="mk" style="left:248.5px;top:288.9px;background:#ffff00"></div>
<div class="mk" style="left:240.7px;top:271.2px;background:#ff7e00"></div>
<div class="mk" style="left:282.3px;top:247.6px;background:#ff0000"></div>
<div class="mk" style="left:292.3px;top:241.6px;background:#ff0000"></div>
<div class="mk" style="left:316.7px;top:272.5px;background:#ff0000"></div>
<div class="mk" style="left:357.3px;top:254.1px;background:#ff7e00"></div>
<div class="mk" style="left:343.8px;top:268.1px;background:#ff0000"></div>
<div class="mk" style="left:389.5px;top:244.7px;background:#ffff00"></div>
<div class="mk" style="left:423.4px;top:205.6px;background:#ffff00"></div>
<div class="mk" style="left:402.8px;top:160.3px;background:#ffff00"></div>
<div class="mk" style="left:432.8px;top:149.6px;background:#8c8c8c"></div>
<div class="mk" style="left:361.4px;top:111.9px;background:#00e400"></div>
<div class="ml" style="left:-12.9px;top:148.9px">58</div>
<div class="ml" style="left:36.1px;top:282.6px">100</div>
<div class="ml" style="left:63.9px;top:256.2px">69</div>
<div class="ml" style="left:50.2px;top:206.2px">N/A</div>
<div class="ml" style="left:86.1px;top:199.2px">89</div>
<div class="ml" style="left:101.8px;top:219.2px">69</div>
<div class="ml" style="left:95.3px;top:241.5px">N/A</div>
<div class="ml" style="left:127.5px;top:244.9px">43</div>
<div class="ml" style="left:133.5px;top:239.6px">106</div>
<div class="ml" style="left:111.5px;top:234.8px">57</div>
<div class="ml" style="left:112.6px;top:234.8px">72</div>
<div class="ml" style="left:145.6px;top:175.7px">62</div>
<div class="ml" style="left:192.1px;top:155.8px">64</div>
<div class="ml" style="left:190.4px;top:171.9px">77</div>
<div class="ml" style="left:225.5px;top:145.4px">41</div>
<div class="ml" style="left:214.3px;top:147.8px">40</div>
<div class="ml" style="left:191.0px;top:193.5px">152</div>
<div class="ml" style="left:199.3px;top:196.4px">6</div>
<div class="ml" style="left:208.4px;top:197.5px">22</div>
<div class="ml" style="left:214.0px;top:208.7px">N/A</div>
<div class="ml" style="left:226.3px;top:222.4px">84</div>
<div class="ml" style="left:260.7px;top:227.6px">201</div>
<div class="ml" style="left:182.7px;top:241.5px">169</div>
<div class="ml" style="left:207.8px;top:267.2px">74</div>
<div class="ml" style="left:239.5px;top:293.1px">65</div>
<div class="ml" style="left:231.7px;top:275.4px">105</div>
<div class="ml" style="left:273.3px;top:251.8px">174</div>
<div class="ml" style="left:283.3px;top:245.8px">165</div>
<div class="ml" style="left:307.7px;top:276.7px">155</div>
<div class="ml" style="left:348.3px;top:258.3px">133</div>
<div class="ml" style="left:334.8px;top:272.3px">169</div>
<div class="ml" style="left:380.5px;top:248.9px">54</div>
<div class="ml" style="left:414.4px;top:209.8px">96</div>
<div class="ml" style="left:393.8px;top:164.5px">67</div>
<div class="ml" style="left:423.8px;top:153.8px">N/A</div>
<div class="ml" style="left:352.4px;top:116.1px">31</div>
<div id="pop">
 <div class="pt">Bishkek<br>2021-03-31 7:00 PM<br>(LT)</div>
 <div class="ptab"><div class="r1"><span class="c1">Pollutant</span><span class="c2">AQI</span></div><div class="r2"><span class="c1">PM2.5</span><span class="c2">40</span></div></div>
</div>
<div id="poptip"></div>
</div>

<div class="abs ph" style="top:7px"><span>Select a City</span></div>
<div class="abs sel" style="top:34px"><span>Bishkek</span><svg width="24" height="12" viewBox="0 0 24 12" style="position:absolute;left:219px;top:6px"><path d="M2 2.6L7.8 9.2M7.8 2.6L2 9.2" stroke="#999" stroke-width="1.1" fill="none"/><path d="M14 4.4h6.6L17.3 7.6Z" fill="#8c8c8c"/></svg></div>
<div class="abs ph" style="top:78px"><span>Select a Parameter</span></div>
<div class="abs sel" style="top:105px"><span>PM2.5</span><svg width="24" height="12" viewBox="0 0 24 12" style="position:absolute;left:219px;top:6px"><path d="M2 2.6L7.8 9.2M7.8 2.6L2 9.2" stroke="#999" stroke-width="1.1" fill="none"/><path d="M14 4.4h6.6L17.3 7.6Z" fill="#8c8c8c"/></svg></div>
<div id="citybox" class="abs"><b>Bishkek</b><svg width="27" height="26" viewBox="0 0 27 26" style="position:absolute;left:214px;top:19px"><rect width="27" height="26" fill="#f5b335"/><circle cx="5.6" cy="20.4" r="2.5" fill="#fff"/><path d="M3.2 11.5A11.45 11.45 0 0 1 14.65 22.95" stroke="#fff" stroke-width="4" fill="none"/><path d="M3.2 4.7A18.25 18.25 0 0 1 21.45 22.95" stroke="#fff" stroke-width="4.1" fill="none"/></svg></div>
<div id="note" class="abs">Note: Values above 500 are considered Beyond the AQI. Follow<br>recommendations for the Hazardous category. Additional<br>information on reducing exposure to extremely high levels of particle<br>pollution is available <a>here</a>.</div>

<div id="tab1" class="abs tab">AQI</div>
<div class="abs tab" style="left:99px;width:126px">Concentration</div>
<div class="abs tab" style="left:227px;width:103px">Historical</div>
<div id="tabline" class="abs"></div>
<div id="learn" class="abs">Learn more about how the Air Quality Index [AQI] is calculated from the EPA <a>here</a>.</div>

<div id="chart" class="abs">
<svg width="595" height="223" viewBox="0 0 595 223" style="position:absolute;left:0;top:0" font-family="'DejaVu Sans Condensed','DejaVu Sans',sans-serif">
<text x="296.5" y="18.899999999999977" text-anchor="middle" font-size="14.5" letter-spacing="0.22" fill="#3e3e3e" font-stretch="condensed">Bishkek – PM2.5</text>
<path d="M55.7 156.2H587.6" stroke="#e4e4e8" stroke-width="1"/>
<path d="M55.7 128.9H587.6" stroke="#e4e4e8" stroke-width="1"/>
<path d="M55.7 101.5H587.6" stroke="#e4e4e8" stroke-width="1"/>
<path d="M55.7 74.2H587.6" stroke="#e4e4e8" stroke-width="1"/>
<path d="M55.7 46.8H587.6" stroke="#e4e4e8" stroke-width="1"/>
<text x="46.6" y="185.7" text-anchor="end" font-size="8.3" letter-spacing="0.35" fill="#333" font-stretch="condensed">0</text>
<text x="46.6" y="158.3" text-anchor="end" font-size="8.3" letter-spacing="0.35" fill="#333" font-stretch="condensed">100</text>
<text x="46.6" y="131.0" text-anchor="end" font-size="8.3" letter-spacing="0.35" fill="#333" font-stretch="condensed">200</text>
<text x="46.6" y="103.6" text-anchor="end" font-size="8.3" letter-spacing="0.35" fill="#333" font-stretch="condensed">300</text>
<text x="46.6" y="76.3" text-anchor="end" font-size="8.3" letter-spacing="0.35" fill="#333" font-stretch="condensed">400</text>
<text x="46.6" y="48.9" text-anchor="end" font-size="8.3" letter-spacing="0.35" fill="#333" font-stretch="condensed">500</text>
<text transform="translate(23 112.60000000000002) rotate(-90)" text-anchor="middle" font-size="10.3" fill="#222" font-stretch="condensed">AQI</text>
<path d="M55.7 183.6H586.1" stroke="#c0d0e0" stroke-width="1"/>
<path d="M55.7 183.6v7.5M77.8 183.6v7.5M99.9 183.6v7.5M122.0 183.6v7.5M144.1 183.6v7.5M166.2 183.6v7.5M188.3 183.6v7.5M210.4 183.6v7.5M232.5 183.6v7.5M254.6 183.6v7.5M276.7 183.6v7.5M298.8 183.6v7.5M320.9 183.6v7.5M343.0 183.6v7.5M365.1 183.6v7.5M387.2 183.6v7.5M409.3 183.6v7.5M431.4 183.6v7.5M453.5 183.6v7.5M475.6 183.6v7.5M497.7 183.6v7.5M519.8 183.6v7.5M541.9 183.6v7.5M564.0 183.6v7.5M586.1 183.6v7.5" stroke="#c0d0e0" stroke-width="1"/>
<rect x="61.7" y="172.7" width="11.6" height="10.9" fill="#00e400" stroke="#3a3a2a" stroke-width="1"/>
<rect x="83.8" y="168.0" width="11.6" height="15.6" fill="#ffff00" stroke="#3a3a2a" stroke-width="1"/>
<rect x="105.9" y="164.2" width="11.6" height="19.4" fill="#ffff00" stroke="#3a3a2a" stroke-width="1"/>
<rect x="128.0" y="163.4" width="11.6" height="20.2" fill="#ffff00" stroke="#3a3a2a" stroke-width="1"/>
<rect x="150.1" y="165.3" width="11.6" height="18.3" fill="#ffff00" stroke="#3a3a2a" stroke-width="1"/>
<rect x="172.1" y="168.6" width="11.6" height="15.0" fill="#ffff00" stroke="#3a3a2a" stroke-width="1"/>
<rect x="194.2" y="169.4" width="11.6" height="14.2" fill="#ffff00" stroke="#3a3a2a" stroke-width="1"/>
<rect x="216.4" y="168.6" width="11.6" height="15.0" fill="#ffff00" stroke="#3a3a2a" stroke-width="1"/>
<rect x="238.4" y="168.6" width="11.6" height="15.0" fill="#ffff00" stroke="#3a3a2a" stroke-width="1"/>
<rect x="260.6" y="171.8" width="11.6" height="11.8" fill="#00e400" stroke="#3a3a2a" stroke-width="1"/>
<rect x="282.6" y="177.3" width="11.6" height="6.3" fill="#00e400" stroke="#3a3a2a" stroke-width="1"/>
<rect x="304.8" y="177.9" width="11.6" height="5.7" fill="#00e400" stroke="#3a3a2a" stroke-width="1"/>
<rect x="326.9" y="180.3" width="11.6" height="3.3" fill="#00e400" stroke="#3a3a2a" stroke-width="1"/>
<rect x="348.9" y="178.3" width="11.6" height="5.3" fill="#00e400" stroke="#3a3a2a" stroke-width="1"/>
<rect x="371.1" y="178.3" width="11.6" height="5.3" fill="#00e400" stroke="#3a3a2a" stroke-width="1"/>
<rect x="393.1" y="177.9" width="11.6" height="5.7" fill="#00e400" stroke="#3a3a2a" stroke-width="1"/>
<rect x="415.2" y="175.4" width="11.6" height="8.2" fill="#00e400" stroke="#3a3a2a" stroke-width="1"/>
<rect x="437.4" y="177.2" width="11.6" height="6.4" fill="#00e400" stroke="#3a3a2a" stroke-width="1"/>
<rect x="459.4" y="176.2" width="11.6" height="7.4" fill="#00e400" stroke="#3a3a2a" stroke-width="1"/>
<rect x="481.6" y="174.6" width="11.6" height="9.0" fill="#00e400" stroke="#3a3a2a" stroke-width="1"/>
<rect x="503.6" y="172.1" width="11.6" height="11.5" fill="#00e400" stroke="#3a3a2a" stroke-width="1"/>
<rect x="525.8" y="171.6" width="11.6" height="12.0" fill="#00e400" stroke="#3a3a2a" stroke-width="1"/>
<rect x="547.9" y="171.6" width="11.6" height="12.0" fill="#00e400" stroke="#3a3a2a" stroke-width="1"/>
<rect x="570.0" y="172.4" width="11.6" height="11.2" fill="#00e400" stroke="#3a3a2a" stroke-width="1"/>
<text transform="translate(69.5 195.5) rotate(-45)" text-anchor="end" font-size="8.5" letter-spacing="0.15" fill="#666" font-stretch="condensed">8 PM</text>
<text transform="translate(91.6 195.5) rotate(-45)" text-anchor="end" font-size="8.5" letter-spacing="0.15" fill="#666" font-stretch="condensed">9 PM</text>
<text transform="translate(113.7 195.5) rotate(-45)" text-anchor="end" font-size="8.5" letter-spacing="0.15" fill="#666" font-stretch="condensed">10 PM</text>
<text transform="translate(135.8 195.5) rotate(-45)" text-anchor="end" font-size="8.5" letter-spacing="0.15" fill="#666" font-stretch="condensed">11 PM</text>
<text transform="translate(157.8 195.5) rotate(-45)" text-anchor="end" font-size="8.5" letter-spacing="0.15" fill="#666" font-stretch="condensed">1. Apr 2021 12 AM</text>
<text transform="translate(179.9 195.5) rotate(-45)" text-anchor="end" font-size="8.5" letter-spacing="0.15" fill="#666" font-stretch="condensed">1 AM</text>
<text transform="translate(202.1 195.5) rotate(-45)" text-anchor="end" font-size="8.5" letter-spacing="0.15" fill="#666" font-stretch="condensed">2 AM</text>
<text transform="translate(224.1 195.5) rotate(-45)" text-anchor="end" font-size="8.5" letter-spacing="0.15" fill="#666" font-stretch="condensed">3 AM</text>
<text transform="translate(246.2 195.5) rotate(-45)" text-anchor="end" font-size="8.5" letter-spacing="0.15" fill="#666" font-stretch="condensed">4 AM</text>
<text transform="translate(268.4 195.5) rotate(-45)" text-anchor="end" font-size="8.5" letter-spacing="0.15" fill="#666" font-stretch="condensed">5 AM</text>
<text transform="translate(290.4 195.5) rotate(-45)" text-anchor="end" font-size="8.5" letter-spacing="0.15" fill="#666" font-stretch="condensed">6 AM</text>
<text transform="translate(312.6 195.5) rotate(-45)" text-anchor="end" font-size="8.5" letter-spacing="0.15" fill="#666" font-stretch="condensed">7 AM</text>
<text transform="translate(334.6 195.5) rotate(-45)" text-anchor="end" font-size="8.5" letter-spacing="0.15" fill="#666" font-stretch="condensed">8 AM</text>
<text transform="translate(356.8 195.5) rotate(-45)" text-anchor="end" font-size="8.5" letter-spacing="0.15" fill="#666" font-stretch="condensed">9 AM</text>
<text transform="translate(378.9 195.5) rotate(-45)" text-anchor="end" font-size="8.5" letter-spacing="0.15" fill="#666" font-stretch="condensed">10 AM</text>
<text transform="translate(400.9 195.5) rotate(-45)" text-anchor="end" font-size="8.5" letter-spacing="0.15" fill="#666" font-stretch="condensed">11 AM</text>
<text transform="translate(423.1 195.5) rotate(-45)" text-anchor="end" font-size="8.5" letter-spacing="0.15" fill="#666" font-stretch="condensed">12 PM</text>
<text transform="translate(445.1 195.5) rotate(-45)" text-anchor="end" font-size="8.5" letter-spacing="0.15" fill="#666" font-stretch="condensed">1 PM</text>
<text transform="translate(467.2 195.5) rotate(-45)" text-anchor="end" font-size="8.5" letter-spacing="0.15" fill="#666" font-stretch="condensed">2 PM</text>
<text transform="translate(489.4 195.5) rotate(-45)" text-anchor="end" font-size="8.5" letter-spacing="0.15" fill="#666" font-stretch="condensed">3 PM</text>
<text transform="translate(511.4 195.5) rotate(-45)" text-anchor="end" font-size="8.5" letter-spacing="0.15" fill="#666" font-stretch="condensed">4 PM</text>
<text transform="translate(533.6 195.5) rotate(-45)" text-anchor="end" font-size="8.5" letter-spacing="0.15" fill="#666" font-stretch="condensed">5 PM</text>
<text transform="translate(555.7 195.5) rotate(-45)" text-anchor="end" font-size="8.5" letter-spacing="0.15" fill="#666" font-stretch="condensed">6 PM</text>
<text transform="translate(577.8 195.5) rotate(-45)" text-anchor="end" font-size="8.5" letter-spacing="0.15" fill="#666" font-stretch="condensed">7 PM</text>
</svg>
</div>

<div id="cc" class="abs">
 <div class="h">
  <div style="font-size:11.25px;line-height:14px;margin-top:4.3px">Current Conditions</div>
  <div style="font-size:9px;line-height:16px;margin-top:1.6px">observed at</div>
  <div style="font-size:11.25px;line-height:16px;margin-top:-.6px">Mar 31, 2021 7:00 PM (LT)</div>
 </div>
 <div class="g"><div style="margin-top:12px">40 AQI</div><div>Good</div><div>PM2.5</div></div>
 <div class="m">
  <div style="text-align:center;font-weight:bold;font-size:9px;margin-top:8px;color:#222">Health Message</div>
  <div style="font-size:9px;line-height:16.5px;margin:5.5px 0 0 4px;color:#222">The AQI value for your community is between 0 and 50. Air quality is satisfactory and poses little or no health risk.</div>
 </div>
</div>
</body>
</html>
